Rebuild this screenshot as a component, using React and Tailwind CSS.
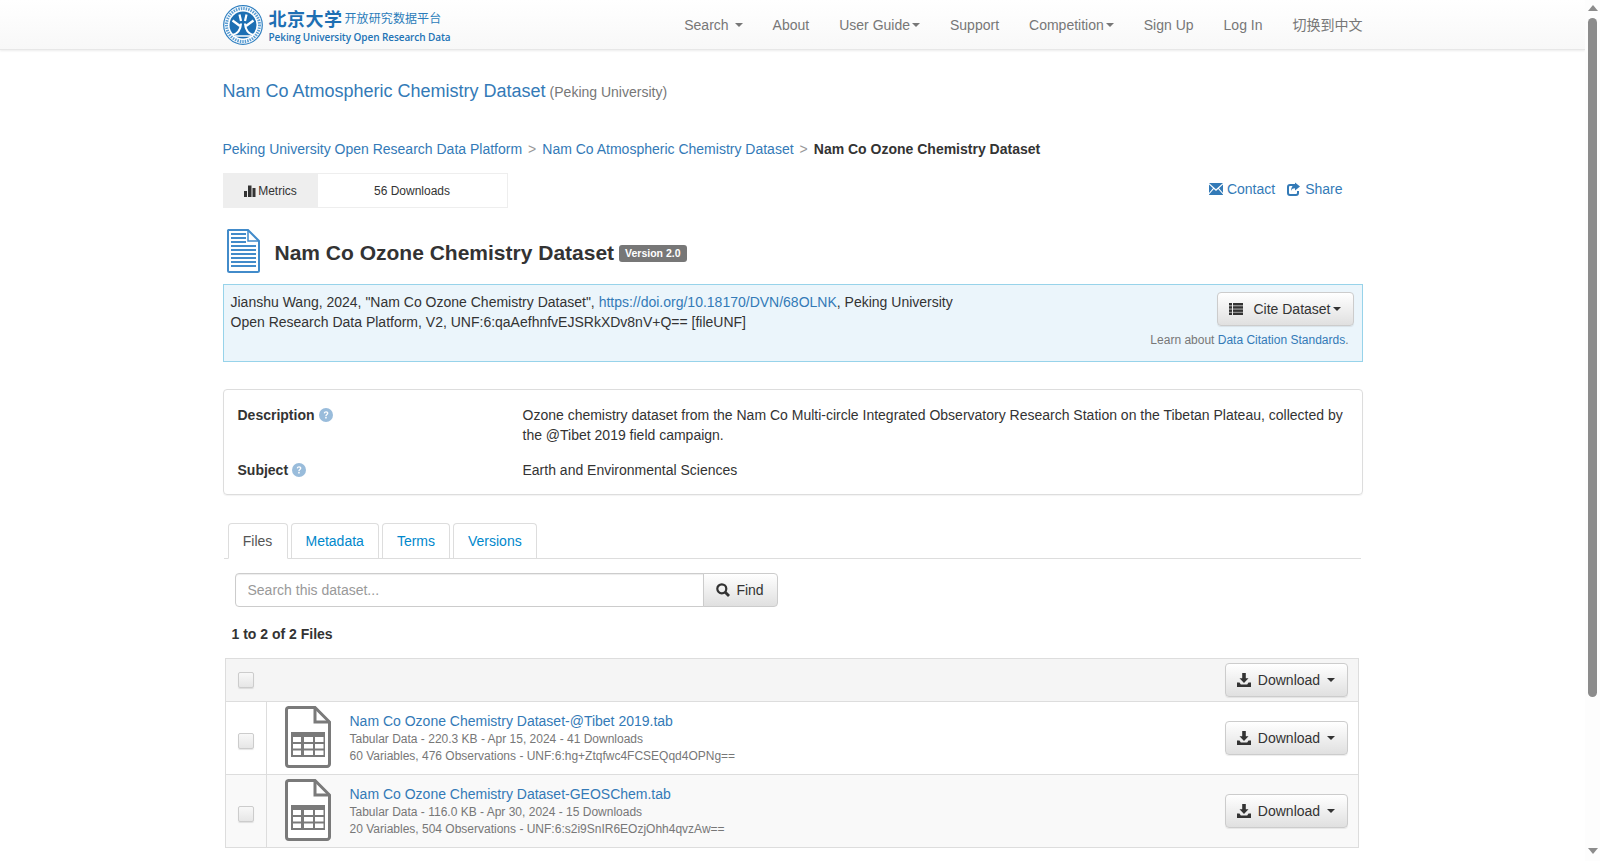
import React from 'react';

const FONT = "font-['Liberation_Sans',Arial,sans-serif]";

const Caret = ({ className = 'border-t-[#333]' }) => (
  <span className={`inline-block w-0 h-0 border-x-4 border-x-transparent border-t-4 ${className}`} />
);

const QuestionIcon = () => (
  <svg className="w-[14px] h-[14px] inline-block" viewBox="0 0 14 14">
    <circle cx="7" cy="7" r="7" fill="#99bcdb" />
    <path d="M4.7 5.3C4.9 3.9 5.8 3.2 7.1 3.2c1.4 0 2.3.8 2.3 1.9 0 1.8-1.7 1.7-1.8 3.1H6.3c0-2 1.7-2 1.7-3 0-.5-.4-.8-.9-.8-.6 0-1 .3-1.1 1.1z" fill="#fff" />
    <rect x="6.2" y="9" width="1.5" height="1.5" fill="#fff" />
  </svg>
);

const DownloadIcon = () => (
  <svg className="w-[14px] h-[14px]" viewBox="0 0 14 14" fill="#333">
    <path d="M5.2 0h3.6v5.2h2.7L7 10 2.500 5.200h2.700z" />
    <path d="M0 9.500h2.500L3.800 11.500h6.400l1.300-2H14V14H0z" />
  </svg>
);

const Gradient = 'bg-gradient-to-b from-white to-[#e0e0e0] border border-[#ccc] rounded-[4px] shadow-[inset_0_1px_0_rgba(255,255,255,0.15),0_1px_1px_rgba(0,0,0,0.075)] text-[#333]';

const DownloadButton = () => (
  <button className={`${Gradient} w-[123px] h-[34px] flex items-center justify-center gap-[7px] text-[14px]`}>
    <DownloadIcon />
    <span>Download</span>
    <Caret />
  </button>
);

const Checkbox = () => (
  <input
    type="checkbox"
    className="appearance-none block w-[16px] h-[16px] rounded-[2px] border border-[#ccc] bg-gradient-to-b from-[#f8f8f8] to-[#e6e6e6] shadow-[0_1px_1px_rgba(0,0,0,0.1)]"
  />
);

const TabularIcon = () => (
  <svg className="w-[46px] h-[62px] shrink-0" viewBox="0 0 46 62">
    <path d="M3.500 1.500H30L44.500 16V58a2.500 2.500 0 0 1-2.500 2.500H4A2.500 2.500 0 0 1 1.500 58V4A2.500 2.500 0 0 1 3.500 1.500z" fill="#fff" stroke="#7a7a7a" strokeWidth="3" />
    <path d="M30 1.500V16h14.500" fill="none" stroke="#7a7a7a" strokeWidth="3" />
    <rect x="6" y="26" width="34" height="25" fill="#7a7a7a" />
    <g fill="#fff">
      <rect x="8" y="31" width="8" height="5" />
      <rect x="19" y="31" width="9" height="5" />
      <rect x="30" y="31" width="8.500" height="5" />
      <rect x="8" y="38" width="8" height="4.500" />
      <rect x="19" y="38" width="9" height="4.500" />
      <rect x="30" y="38" width="8.500" height="4.500" />
      <rect x="8" y="44.500" width="8" height="4.500" />
      <rect x="19" y="44.500" width="9" height="4.500" />
      <rect x="30" y="44.500" width="8.500" height="4.500" />
    </g>
  </svg>
);

const Logo = () => (
  <div className="flex items-center h-[50px]">
    <svg className="w-[40px] h-[40px] shrink-0" viewBox="0 0 40 40">
      <circle cx="20" cy="20" r="19.300" fill="#fff" stroke="#2f7fc0" strokeWidth="1.200" />
      <circle cx="20" cy="20" r="16.500" fill="none" stroke="#5c9ed3" strokeWidth="3" strokeDasharray="1.500 1" />
      <circle cx="20" cy="20" r="13.500" fill="#1d6fb3" />
      <g stroke="#fff" strokeWidth="2.200" fill="none">
        <path d="M16.500 9.500L18 16M23.500 9.500L22 16" />
        <path d="M9.500 15.500L17 21M30.500 15.500L23 21" />
        <path d="M18 18.500C17.500 25 14 29 9.500 30M22 18.500C22.500 25 26 29 30.500 30" />
        <path d="M12 31h16" strokeWidth="1.500" />
      </g>
    </svg>
    <div className="ml-[6px] text-[#2273b5]">
      <div className="flex items-center h-[24px] mt-[1px]">
        <span className="font-['Noto_Sans_CJK_SC',sans-serif] font-bold text-[18px] leading-[24px] tracking-[0.5px] w-[76px] text-[#1d6fb3]">北京大学</span>
        <span className="font-['Noto_Sans_CJK_SC',sans-serif] text-[12px] leading-[16px] tracking-[0.1px] text-[#2b7cba]">开放研究数据平台</span>
      </div>
      <div className="font-['Open_Sans',sans-serif] font-semibold text-[10px] leading-[14px] tracking-[-0.08px] whitespace-nowrap">Peking University Open Research Data</div>
    </div>
  </div>
);

const navItems = [
  { label: 'Search', caret: 'spaced' },
  { label: 'About' },
  { label: 'User Guide', caret: 'tight' },
  { label: 'Support' },
  { label: 'Competition', caret: 'tight' },
  { label: 'Sign Up' },
  { label: 'Log In' },
  { label: '切换到中文' },
];

const files = [
  {
    name: 'Nam Co Ozone Chemistry Dataset-@Tibet 2019.tab',
    info: 'Tabular Data - 220.3 KB - Apr 15, 2024 - 41 Downloads',
    unf: '60 Variables, 476 Observations - UNF:6:hg+Ztqfwc4FCSEQqd4OPNg==',
    rowClass: 'bg-white h-[73px]',
  },
  {
    name: 'Nam Co Ozone Chemistry Dataset-GEOSChem.tab',
    info: 'Tabular Data - 116.0 KB - Apr 30, 2024 - 15 Downloads',
    unf: '20 Variables, 504 Observations - UNF:6:s2i9SnIR6EOzjOhh4qvzAw==',
    rowClass: 'bg-[#f9f9f9] h-[73px]',
  },
];

const tabs = ['Metadata', 'Terms', 'Versions'];

const App = () => {
  return (
    <div className={`${FONT} flex h-[861px] overflow-hidden bg-white text-[14px] leading-[20px] text-[#333]`}>
      <div className="flex-1 min-w-0">
        {/* Navbar */}
        <nav className="h-[50px] bg-gradient-to-b from-white to-[#f8f8f8] border-b border-[#e7e7e7] shadow-[0_1px_2px_rgba(0,0,0,0.08)]">
          <div className="w-[1140px] mx-auto h-[49px] flex items-center justify-between">
            <Logo />
            <ul className="flex items-center gap-[30px] text-[#777]">
              {navItems.map((item) => (
                <li key={item.label} className={`flex items-center font-['Liberation_Sans','Noto_Sans_CJK_SC',sans-serif] ${item.caret === 'spaced' ? 'gap-[6px]' : 'gap-[2px]'}`}>
                  {item.label}
                  {item.caret && <Caret className="border-t-[#777]" />}
                </li>
              ))}
            </ul>
          </div>
        </nav>

        <div className="w-[1140px] mx-auto">
          {/* Dataverse title */}
          <div className="mt-[28px] h-[26px] flex items-baseline gap-[4px]">
            <a className="text-[18px] leading-[26px] text-[#337ab7]">Nam Co Atmospheric Chemistry Dataset</a>
            <span className="text-[#777]">(Peking University)</span>
          </div>

          {/* Breadcrumb */}
          <div className="mt-[35px] h-[20px] flex">
            <a className="text-[#337ab7]">Peking University Open Research Data Platform</a>
            <span className="mx-[6px] text-[#999]">&gt;</span>
            <a className="text-[#337ab7]">Nam Co Atmospheric Chemistry Dataset</a>
            <span className="mx-[6px] text-[#999]">&gt;</span>
            <span className="font-bold">Nam Co Ozone Chemistry Dataset</span>
          </div>

          {/* Metrics + contact */}
          <div className="mt-[14px] h-[35px] flex justify-between">
            <div className="w-[285px] flex border border-[#eee] text-[12px]">
              <div className="w-[94px] bg-[#eee] flex items-center justify-center gap-[2px]">
                <svg className="w-[12px] h-[12px]" viewBox="0 0 12 12" fill="#333">
                  <rect x="0" y="6" width="3" height="6" />
                  <rect x="4" y="0.500" width="3.500" height="11.500" />
                  <rect x="8.500" y="3" width="3" height="9" />
                </svg>
                Metrics
              </div>
              <div className="flex-1 flex items-center justify-center">56 Downloads</div>
            </div>
            <div className="flex items-start pt-[6px] pr-[20px] text-[#337ab7]">
              <a className="flex items-center gap-[4px]">
                <svg className="w-[14px] h-[12px]" viewBox="0 0 14 12" fill="#337ab7">
                  <path d="M0 0h14L7 6.200z" />
                  <path d="M0 1.500L4 5.200 0 10zM14 1.500L10 5.200 14 10zM4.800 6L7 7.900 9.200 6 14 11.500V12H0v-.5z" />
                </svg>
                Contact
              </a>
              <a className="flex items-center gap-[5px] ml-[12px]">
                <svg className="w-[13px] h-[14px]" viewBox="0 0 13 14">
                  <path d="M8 3H3a2 2 0 0 0-2 2v6a2 2 0 0 0 2 2h6a2 2 0 0 0 2-2V9" fill="none" stroke="#337ab7" strokeWidth="2" />
                  <path d="M8 0.500L13 4.500 8 8.500V6.300C6 6.300 4.800 7 4 9 4 5.500 5.500 3 8 2.700z" fill="#337ab7" />
                </svg>
                Share
              </a>
            </div>
          </div>

          {/* Dataset heading */}
          <div className="mt-[21px] h-[44px] flex items-center">
            <svg className="ml-[4px] w-[33px] h-[44px] shrink-0" viewBox="0 0 33 44">
              <path d="M1.500 1H21L32 12V41.500a1.500 1.500 0 0 1-1.500 1.500H2.500A1.500 1.500 0 0 1 1 41.500V1.500z" fill="#fff" stroke="#428bca" strokeWidth="2" />
              <path d="M21 1V12H32" fill="none" stroke="#428bca" strokeWidth="1.500" />
              <g fill="#428bca">
                <rect x="4" y="4" width="15" height="2" />
                <rect x="4" y="8" width="15" height="2" />
                <rect x="4" y="12" width="15" height="2" />
                <rect x="4" y="16" width="25" height="2" />
                <rect x="4" y="20" width="25" height="2" />
                <rect x="4" y="24" width="25" height="2" />
                <rect x="4" y="28" width="25" height="2" />
                <rect x="4" y="32" width="25" height="2" />
                <rect x="4" y="36" width="25" height="2" />
              </g>
            </svg>
            <h1 className="ml-[15px] text-[21px] leading-[24px] font-bold mt-[4px]">Nam Co Ozone Chemistry Dataset</h1>
            <span className="ml-[5px] mt-[4px] h-[17px] px-[6px] rounded-[3px] bg-[#777] text-white text-[10.500px] leading-[17px] font-bold">Version 2.0</span>
          </div>

          {/* Citation */}
          <div className="mt-[11px] h-[78px] bg-[#ebf5fb] border border-[#97d3ea] flex justify-between pl-[7px] pr-[8px] pt-[7px]">
            <div className="w-[740px]">
              Jianshu Wang, 2024, "Nam Co Ozone Chemistry Dataset", <a className="text-[#337ab7]">https://doi.org/10.18170/DVN/68OLNK</a>, Peking University Open Research Data Platform, V2, UNF:6:qaAefhnfvEJSRkXDv8nV+Q== [fileUNF]
            </div>
            <div className="flex flex-col items-end">
              <button className={`${Gradient} w-[137px] h-[34px] flex items-center justify-center gap-[2px]`}>
                <svg className="w-[14px] h-[12px] mr-[8px]" viewBox="0 0 14 12" fill="#333">
                  <rect x="0" y="0" width="3" height="2.500" />
                  <rect x="4" y="0" width="10" height="2.500" />
                  <rect x="0" y="3.200" width="3" height="2.500" />
                  <rect x="4" y="3.200" width="10" height="2.500" />
                  <rect x="0" y="6.400" width="3" height="2.500" />
                  <rect x="4" y="6.400" width="10" height="2.500" />
                  <rect x="0" y="9.500" width="3" height="2.500" />
                  <rect x="4" y="9.500" width="10" height="2.500" />
                </svg>
                <span>Cite Dataset</span>
                <Caret />
              </button>
              <div className="mt-[4px] mr-[5px] text-[12px] leading-[20px] text-[#777]">
                Learn about <a className="text-[#337ab7]">Data Citation Standards</a>.
              </div>
            </div>
          </div>

          {/* Metadata summary */}
          <div className="mt-[27px] h-[106px] border border-[#ddd] rounded-[4px] pt-[15px] px-[14px] shadow-[0_1px_1px_rgba(0,0,0,0.05)]">
            <div className="flex h-[55px]">
              <div className="w-[285px] shrink-0 font-bold flex items-start gap-[4px]">Description <span className="mt-[-1px]"><QuestionIcon /></span></div>
              <div className="w-[830px]">Ozone chemistry dataset from the Nam Co Multi-circle Integrated Observatory Research Station on the Tibetan Plateau, collected by the @Tibet 2019 field campaign.</div>
            </div>
            <div className="flex">
              <div className="w-[285px] shrink-0 font-bold flex items-start gap-[4px]">Subject <span className="mt-[-1px]"><QuestionIcon /></span></div>
              <div>Earth and Environmental Sciences</div>
            </div>
          </div>

          {/* Tabs */}
          <div className="mt-[28px] h-[36px] ml-[1px] mr-[2px] pl-[4px] flex gap-[3px] border-b border-[#ddd]">
            <div className="h-[36px] w-[60px] flex items-center justify-center bg-white border border-[#ddd] border-b-white rounded-t-[4px] text-[#555]">Files</div>
            {tabs.map((tab) => (
              <div key={tab} className="h-[35px] px-[14px] flex items-center border border-[#ddd] border-b-0 rounded-t-[4px] text-[#0088cc]">{tab}</div>
            ))}
          </div>

          {/* Search */}
          <div className="mt-[14px] ml-[12px] w-[543px] h-[34px] flex">
            <input
              placeholder="Search this dataset..."
              className="flex-1 min-w-0 h-[34px] px-[12px] border border-[#ccc] rounded-l-[4px] bg-white outline-none shadow-[inset_0_1px_1px_rgba(0,0,0,0.075)] placeholder:text-[#999]"
            />
            <button className="w-[75px] h-[34px] ml-[-1px] bg-gradient-to-b from-white to-[#e0e0e0] border border-[#ccc] rounded-r-[4px] flex items-center justify-center gap-[6px]">
              <svg className="w-[14px] h-[14px]" viewBox="0 0 14 14" fill="none" stroke="#333">
                <circle cx="5.800" cy="5.800" r="4.500" strokeWidth="2.200" />
                <path d="M9 9l4 4" strokeWidth="2.800" />
              </svg>
              Find
            </button>
          </div>

          <div className="mt-[17px] ml-[9px] h-[20px] font-bold">1 to 2 of 2 Files</div>

          {/* Files table */}
          <div className="mt-[14px] ml-[2px] w-[1134px] border border-[#ddd] border-b-0">
            <div className="h-[43px] bg-[#f5f5f5] border-b border-[#ddd] flex items-center justify-between pl-[12px] pr-[10px]">
              <Checkbox />
              <DownloadButton />
            </div>
            {files.map((file) => (
              <div key={file.name} className={`${file.rowClass} border-b border-[#ddd] flex`}>
                <div className="w-[41px] shrink-0 border-r border-[#ddd] pl-[12px] pt-[31px]">
                  <Checkbox />
                </div>
                <div className="pl-[18px] pt-[4px]"><TabularIcon /></div>
                <div className="ml-[19px] pt-[9px]">
                  <a className="block text-[#337ab7]">{file.name}</a>
                  <div className="text-[12px] leading-[17px] text-[#777]">{file.info}</div>
                  <div className="text-[12px] leading-[17px] text-[#777]">{file.unf}</div>
                </div>
                <div className="ml-auto pr-[10px] pt-[19px]"><DownloadButton /></div>
              </div>
            ))}
          </div>
        </div>
      </div>

      {/* Scrollbar */}
      <div className="w-[15px] shrink-0 bg-[#fdfdfd] flex flex-col items-center">
        <span className="mt-[5px] w-0 h-0 border-x-[5px] border-x-transparent border-b-[6px] border-b-[#8c8c8c]" />
        <div className="mt-[7px] w-[9px] h-[679px] bg-[#8c8c8c] rounded-[5px]" />
        <span className="mt-[151px] w-0 h-0 border-x-[5px] border-x-transparent border-t-[6px] border-t-[#8c8c8c]" />
      </div>
    </div>
  );
};

export default App;
